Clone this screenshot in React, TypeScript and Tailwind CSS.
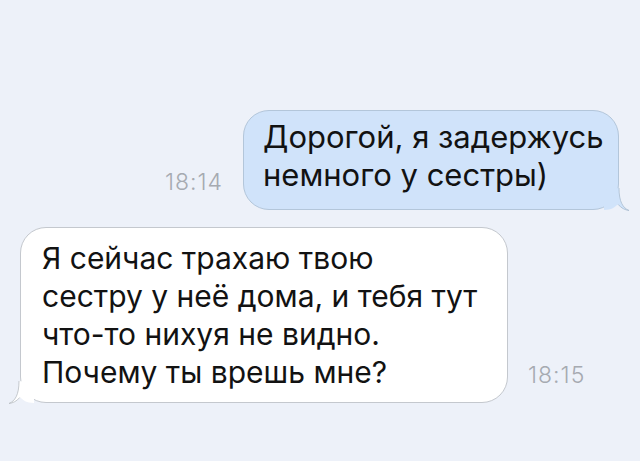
import React from 'react';

const font = { fontFamily: 'Inter, "Liberation Sans", Arial, sans-serif' };

// iOS-style tail for the outgoing (blue) bubble, bottom right
const OutTail = () => (
  <svg className="absolute -right-[12px] bottom-[-3px]" width="26" height="24" viewBox="0 0 26 24">
    <path d="M0 2 L0 22 L5 21.5 C10 20.5 12 17.5 14 16.5 C17 20 21 22 25 22.5 C19 20 15 14 15 0 Z" fill="#d0e3fa" />
    <path d="M14.3 16.5 C17 20 21 22 25 22.5 M15 0 C15 14 19 20 25 22.5" fill="none" stroke="#a9bccf" strokeWidth="0.8" />
  </svg>
);

// tail for the incoming (white) bubble, bottom left
const InTail = () => (
  <svg className="absolute -left-[13px] bottom-[-3px]" width="26" height="24" viewBox="0 0 26 24">
    <path d="M26 2 L26 22 L21 21.5 C16 20.5 14 17.5 12 16.5 C9 20 5 22 1 22.5 C7 20 11 14 11 0 Z" fill="#ffffff" />
    <path d="M11.7 16.5 C9 20 5 22 1 22.5 M11 0 C11 14 7 20 1 22.5" fill="none" stroke="#b8bcc2" strokeWidth="0.8" />
  </svg>
);

export default function App() {
  return (
    <div className="w-[640px] h-[461px] bg-[#edf1f9] pt-[110px] overflow-hidden" style={font}>
      <div className="flex justify-end items-end pr-[21px]">
        <span className="text-[23px] font-light tracking-[1px] text-[#a6aab1] mr-[20px] mb-[16px] leading-none">18:14</span>
        <div className="relative w-[376px] h-[100px] rounded-[26px] bg-[#d0e3fa] border border-[#b3c6da] pl-[19px] pt-[7px]">
          <p className="text-[31px] leading-[38px] text-[#121212]">
            Дорогой, я задержусь
            <br />
            немного у сестры)
          </p>
          <OutTail />
        </div>
      </div>

      <div className="flex items-end pl-[20px] mt-[17px]">
        <div className="relative w-[488px] h-[176px] rounded-[26px] bg-white border border-[#c4c8ce] pl-[21px] pt-[11px]">
          <p className="text-[30px] leading-[38px] text-[#121212]">
            Я сейчас трахаю твою
            <br />
            сестру у неё дома, и тебя тут
            <br />
            что-то нихуя не видно.
            <br />
            Почему ты врешь мне?
          </p>
          <InTail />
        </div>
        <span className="text-[23px] font-light tracking-[1px] text-[#a6aab1] ml-[20px] mb-[16px] leading-none">18:15</span>
      </div>
    </div>
  );
}
